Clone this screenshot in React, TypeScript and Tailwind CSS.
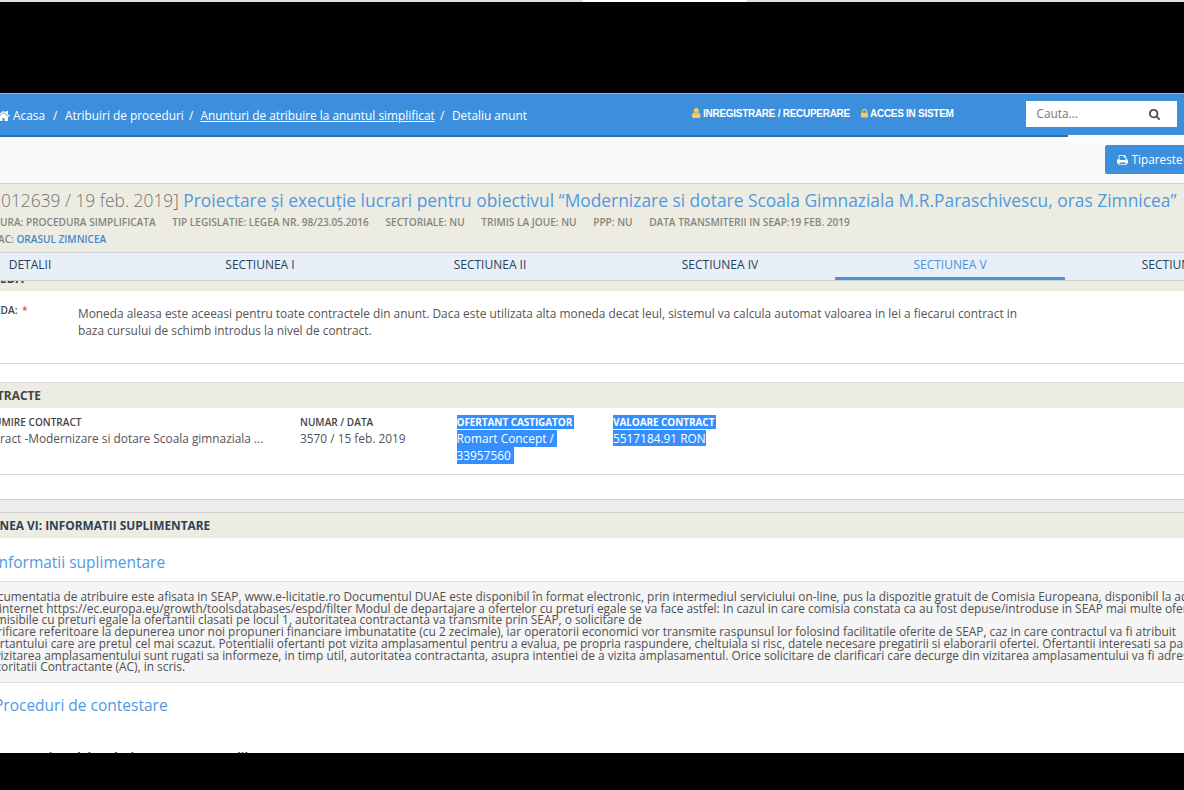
const icons = {
  home: {
    viewBox: "0 0 1664 1792",
    d: "M1408 992v480q0 26-19 45t-45 19h-384v-384h-256v384h-384q-26 0-45-19t-19-45v-480q0-1 .5-3t.5-3l575-474 575 474q1 2 1 6zm223-69l-62 74q-8 9-21 11h-3q-13 0-21-7l-692-577-692 577q-12 8-24 7-13-2-21-11l-62-74q-8-10-7-23.5t11-21.5l719-599q32-26 76-26t76 26l244 204v-195q0-14 9-23t23-9h192q14 0 23 9t9 23v408l219 182q10 8 11 21.5t-7 23.5z",
  },
  search: {
    viewBox: "0 0 1664 1792",
    d: "M1152 832q0-185-131.5-316.5t-316.5-131.5-316.5 131.5-131.5 316.5 131.5 316.5 316.5 131.5 316.5-131.5 131.5-316.5zm512 832q0 52-38 90t-90 38q-54 0-90-38l-343-342q-179 124-399 124-143 0-273.5-55.5t-225-150-150-225-55.5-273.5 55.5-273.5 150-225 225-150 273.5-55.5 273.5 55.5 225 150 150 225 55.5 273.5q0 220-124 399l343 343q37 37 37 90z",
  },
  user: {
    viewBox: "0 0 1280 1792",
    d: "M1280 1399q0 109-62.5 187t-150.5 78h-854q-88 0-150.5-78t-62.5-187q0-85 8.5-160.5t31.5-152 58.5-131 94-89 134.5-34.5q131 128 313 128t313-128q76 0 134.5 34.5t94 89 58.5 131 31.5 152 8.5 160.5zm-256-887q0 159-112.5 271.5t-271.5 112.5-271.5-112.5-112.5-271.5 112.5-271.5 271.5-112.5 271.5 112.5 112.5 271.5z",
  },
  lock: {
    viewBox: "0 0 1152 1792",
    d: "M320 768h512v-192q0-106-75-181t-181-75-181 75-75 181v192zm832 96v576q0 40-28 68t-68 28h-960q-40 0-68-28t-28-68v-576q0-40 28-68t68-28h32v-192q0-184 132-316t316-132 316 132 132 316v192h32q40 0 68 28t28 68z",
  },
  print: {
    viewBox: "0 0 1664 1792",
    d: "M384 1536h896v-256h-896v256zm0-640h896v-384h-160q-40 0-68-28t-28-68v-160h-640v640zm1152 64q0-26-19-45t-45-19-45 19-19 45 19 45 45 19 45-19 19-45zm128 0v416q0 13-9.5 22.5t-22.5 9.5h-224v160q0 40-28 68t-68 28h-960q-40 0-68-28t-28-68v-160h-224q-13 0-22.5-9.5t-9.5-22.5v-416q0-79 56.5-135.5t135.5-56.5h64v-544q0-40 28-68t68-28h672q40 0 88 20t76 48l152 152q28 28 48 76t20 88v256h64q79 0 135.5 56.5t56.5 135.5z",
  },
};

const tabs = [
  "DETALII",
  "SECTIUNEA I",
  "SECTIUNEA II",
  "SECTIUNEA IV",
  "SECTIUNEA V",
  "SECTIUNEA VI",
];

const noticeLines = [
  "Documentatia de atribuire este afisata in SEAP, www.e-licitatie.ro Documentul DUAE este disponibil în format electronic, prin intermediul serviciului on-line, pus la dispozitie gratuit de Comisia Europeana, disponibil la adresa",
  "de internet https://ec.europa.eu/growth/toolsdatabases/espd/filter Modul de departajare a ofertelor cu preturi egale se va face astfel: In cazul in care comisia constata ca au fost depuse/introduse in SEAP mai multe oferte",
  "admisibile cu preturi egale la ofertantii clasati pe locul 1, autoritatea contractanta va transmite prin SEAP, o solicitare de",
  "clarificare referitoare la depunerea unor noi propuneri financiare imbunatatite (cu 2 zecimale), iar operatorii economici vor transmite raspunsul lor folosind facilitatile oferite de SEAP, caz in care contractul va fi atribuit",
  "ofertantului care are pretul cel mai scazut. Potentialii ofertanti pot vizita amplasamentul pentru a evalua, pe propria raspundere, cheltuiala si risc, datele necesare pregatirii si elaborarii ofertei. Ofertantii interesati sa participe",
  "la vizitarea amplasamentului sunt rugati sa informeze, in timp util, autoritatea contractanta, asupra intentiei de a vizita amplasamentul. Orice solicitare de clarificari care decurge din vizitarea amplasamentului va fi adresata",
  "Autoritatii Contractante (AC), in scris.",
];

function Icon({
  name,
  className,
}: {
  name: keyof typeof icons;
  className: string;
}) {
  return (
    <svg
      viewBox={icons[name].viewBox}
      fill="currentColor"
      className={`shrink-0 overflow-visible ${className}`}
    >
      <path d={icons[name].d} />
    </svg>
  );
}

// Text that runs off the left side: `lead` ends exactly where `children` begins.
function Bleed({
  lead,
  className = "",
  children,
}: {
  lead: string;
  className?: string;
  children: React.ReactNode;
}) {
  return (
    <div className={`flex whitespace-pre ${className}`}>
      <span className="-ml-[120px] flex w-[120px] shrink-0 justify-end">
        {lead}
      </span>
      <span>{children}</span>
    </div>
  );
}

function TopBar() {
  return (
    <header className="flex h-[44px] border-t border-[#8fbbe2]">
      <div className="flex w-[1068px] shrink-0 border-b-2 border-[#2a6fb0] bg-[#3c8fdc] text-[11.85px] font-medium text-white">
        <nav className="mt-[13px] flex h-[18px] w-[692px] shrink-0 items-center whitespace-pre">
          <Icon name="home" className="-ml-[3px] mr-[3px] h-[14px] w-[13px]" />
          <span className="w-[40px]">Acasa</span>
          <span className="w-[12px]">/</span>
          <span className="w-[124px]">Atribuiri de proceduri</span>
          <span className="w-[11.5px]">/</span>
          <span className="w-[239.5px] underline">
            Anunturi de atribuire la anuntul simplificat
          </span>
          <span className="w-[12px]">/</span>
          <span>Detaliu anunt</span>
        </nav>
        <div className="mt-[10px] flex h-[18px] w-[334px] shrink-0 items-center whitespace-nowrap font-['Liberation_Sans',sans-serif] text-[10px] font-bold tracking-[-0.28px]">
          <Icon
            name="user"
            className="mr-[2.5px] h-[12px] w-[8.5px] text-[#f5cb5c]"
          />
          <span className="w-[158px]">INREGISTRARE / RECUPERARE</span>
          <Icon
            name="lock"
            className="mr-[2px] h-[11px] w-[7px] text-[#f5cb5c]"
          />
          <span>ACCES IN SISTEM</span>
        </div>
        <SearchBox />
      </div>
      <div className="h-[41px] grow bg-[#3c8fdc]" />
    </header>
  );
}

function SearchBox() {
  return (
    <div className="relative z-10 mt-[7px] flex h-[26px] w-[150.5px] shrink-0 items-center justify-between bg-white pl-[10.5px] pr-[17px] font-normal">
      <span className="text-[11.8px] text-[#777]">Cauta...</span>
      <Icon name="search" className="h-[12px] w-[11px] text-[#444]" />
    </div>
  );
}

function TitlePanel() {
  return (
    <section className="h-[69px] overflow-hidden border-t border-[#cfcfcb] bg-[#edece3]">
      <Bleed
        lead="[SCNA1"
        className="ml-[1px] mt-[4px] h-[24px] items-center text-[17.39px] font-light text-[#73736d]"
      >
        012639 / 19 feb. 2019]{" "}
        <span className="font-normal text-[#5199de]">
          Proiectare și execuție lucrari pentru obiectivul “Modernizare si
          dotare Scoala Gimnaziala M.R.Paraschivescu, oras Zimnicea”
        </span>
      </Bleed>
      <Bleed
        lead="TIP PROCED"
        className="mt-[3px] h-[16px] items-center text-[10.08px] font-semibold text-[#85857b]"
      >
        <span className="flex gap-[16.6px]">
          <span>URA: PROCEDURA SIMPLIFICATA</span>
          <span>TIP LEGISLATIE: LEGEA NR. 98/23.05.2016</span>
          <span>SECTORIALE: NU</span>
          <span>TRIMIS LA JOUE: NU</span>
          <span>PPP: NU</span>
          <span>DATA TRANSMITERII IN SEAP:19 FEB. 2019</span>
        </span>
      </Bleed>
      <Bleed
        lead="NUME "
        className="-ml-[2px] h-[17px] items-center text-[10.07px] font-semibold text-[#85857b]"
      >
        AC: <span className="text-[#4488cb]">ORASUL ZIMNICEA</span>
      </Bleed>
    </section>
  );
}

function Tabs() {
  return (
    <nav className="h-[29px] overflow-hidden border-y border-[#cdcfcf] bg-[#e9eff6]">
      <div className="-ml-[85px] flex w-[1380px]">
        {tabs.map((tab) => (
          <div
            key={tab}
            className={
              tab === "SECTIUNEA V"
                ? "h-[27px] w-[230px] border-b-3 border-[#4a93d6] text-center text-[12px] font-medium leading-[23px] text-[#4a93dc]"
                : "h-[27px] w-[230px] text-center text-[12px] font-medium leading-[23px] text-[#25415c]"
            }
          >
            {tab}
          </div>
        ))}
      </div>
    </nav>
  );
}

function Currency() {
  return (
    <section>
      <div className="h-[10px] overflow-hidden bg-[#edece3]">
        <Bleed
          lead="MON"
          className="-mt-[11px] text-[11.86px] font-bold leading-[17px] text-[#444]"
        >
          EDA
        </Bleed>
      </div>
      <div className="flex h-[73px] border-b border-[#d9d9d9]">
        <div className="w-[78px] shrink-0 pt-[11px]">
          <Bleed
            lead="MON"
            className="-ml-[5px] text-[10.07px] font-semibold leading-[16px] text-[#444]"
          >
            EDA: <span className="pl-[2px] text-[#dd5560]">*</span>
          </Bleed>
        </div>
        <p className="w-[960px] shrink-0 whitespace-nowrap pt-[14px] text-[11.885px] leading-[17px] text-[#555]">
          Moneda aleasa este aceeasi pentru toate contractele din anunt. Daca
          este utilizata alta moneda decat leul, sistemul va calcula automat
          valoarea in lei a fiecarui contract in
          <br />
          baza cursului de schimb introdus la nivel de contract.
        </p>
      </div>
    </section>
  );
}

function Contracts() {
  return (
    <section className="mt-[18px]">
      <h2 className="h-[26px] border-t border-[#dcdcd8] bg-[#edece3]">
        <Bleed
          lead="CON"
          className="-ml-[3px] text-[11.86px] font-bold leading-[24px] text-[#444]"
        >
          TRACTE
        </Bleed>
      </h2>
      <div className="flex h-[67px] border-b border-[#d9d9d9] pt-[5px] text-[11.86px] leading-[17px] text-[#555]">
        <div className="w-[300px] shrink-0">
          <Bleed
            lead="DENU"
            className="ml-[1.5px] h-[17px] text-[10.07px] font-semibold leading-[19px] text-[#444]"
          >
            MIRE CONTRACT
          </Bleed>
          <Bleed lead="Cont">
            ract -Modernizare si dotare Scoala gimnaziala ...
          </Bleed>
        </div>
        <div className="w-[156.5px] shrink-0">
          <div className="h-[17px] text-[10.07px] font-semibold leading-[19px] text-[#444]">
            NUMAR / DATA
          </div>
          <div>3570 / 15 feb. 2019</div>
        </div>
        <div className="w-[156.5px] shrink-0 text-white">
          <div className="flex h-[17px] items-center">
            <span className="h-[14px] w-[117.5px] bg-[#3390fe] text-[10px] font-bold leading-[14px] tracking-[-0.08px]">
              OFERTANT CASTIGATOR
            </span>
          </div>
          <div className="h-[17px] w-[100px] bg-[#3390fe]">
            Romart Concept /
          </div>
          <div className="h-[17px] w-[57.5px] bg-[#3390fe]">33957560</div>
        </div>
        <div className="shrink-0 text-white">
          <div className="flex h-[17px] items-center">
            <span className="h-[14px] w-[103px] bg-[#3390fe] text-[10px] font-bold leading-[14px] tracking-[-0.08px]">
              VALOARE CONTRACT
            </span>
          </div>
          <div className="h-[16px] w-[93px] bg-[#3390fe]">5517184.91 RON</div>
        </div>
      </div>
      <div className="h-[24px]" />
    </section>
  );
}

function ExtraInfo() {
  return (
    <section>
      <div className="h-[14px] border-y border-[#cfcfcf] bg-[#ededed]" />
      <h2 className="h-[25px] bg-[#edece3]">
        <Bleed
          lead="SECTIU"
          className="-ml-[0.5px] text-[11.86px] font-bold leading-[25px] text-[#2c4257]"
        >
          NEA VI: INFORMATII SUPLIMENTARE
        </Bleed>
      </h2>
      <Bleed
        lead="VI.1) I"
        className="-ml-[1.5px] h-[43px] text-[15.5px] leading-[49px] text-[#5199de]"
      >
        nformatii suplimentare
      </Bleed>
      <div className="h-[102px] border-y border-[#dadada] bg-[#f5f5f5] pt-[9px] text-[11.888px] leading-[11.7px] text-[#505050]">
        {noticeLines.map((line) => (
          <div key={line} className="-ml-[18px] whitespace-nowrap">
            {line}
          </div>
        ))}
      </div>
      <Bleed
        lead="VI.2) "
        className="-ml-[6px] h-[62px] text-[15.5px] leading-[44px] text-[#5199de]"
      >
        Proceduri de contestare
      </Bleed>
      <Bleed
        lead="VI."
        className="-ml-[1px] text-[11.7px] font-bold leading-[24px] text-[#2c4257]"
      >
        4) Organismul de solutionare a contestatiilor
      </Bleed>
    </section>
  );
}

export default function App() {
  return (
    <div className="flex h-[790px] flex-col overflow-hidden bg-black font-['Open_Sans',sans-serif]">
      <div className="flex h-[2px] shrink-0 bg-[#dcdfe3]">
        <div className="ml-[583px] w-[164px] bg-white" />
      </div>
      <div className="mt-[91px] h-[660px] shrink-0 overflow-hidden bg-white">
        <TopBar />
        <div className="flex h-[46px] justify-end bg-[#fafafa]">
          <button className="mt-[8px] flex h-[29px] w-[79px] items-center gap-[3.5px] whitespace-nowrap rounded-l-[2px] bg-[#3c8fdc] pl-[12px] text-[11.8px] font-medium text-white">
            <Icon name="print" className="h-[12px] w-[11px]" />
            Tipareste
          </button>
        </div>
        <TitlePanel />
        <Tabs />
        <Currency />
        <Contracts />
        <ExtraInfo />
      </div>
    </div>
  );
}
